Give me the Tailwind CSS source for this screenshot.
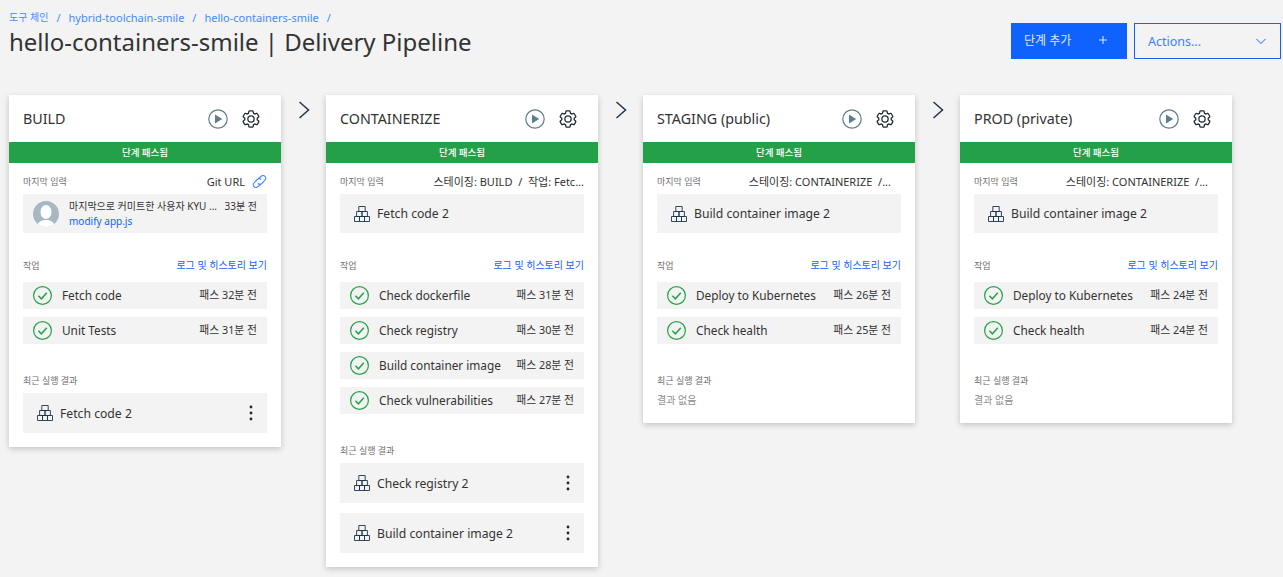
<!DOCTYPE html>
<html lang="ko">
<head>
  <meta charset="UTF-8">
  <title>hello-containers-smile | Delivery Pipeline</title>
  <script src="https://cdn.jsdelivr.net/npm/@tailwindcss/browser@4"></script>
</head>
<body class="bg-[#f3f3f3] h-[577px] overflow-hidden text-[#333] font-['Noto_Sans','Noto_Sans_CJK_KR',sans-serif]">

  <!-- Page header -->
  <header class="flex justify-between h-[95px] pl-[9px] pr-[2px]">
    <div>
      <nav class="flex gap-[8px] pt-[10px] h-[29px] text-[11px] leading-[15px] text-[#4589ff]">
        <a class="text-[10px]">도구 체인</a><span>/</span><a>hybrid-toolchain-smile</a><span>/</span><a>hello-containers-smile</a><span>/</span>
      </nav>
      <h1 class="text-[24px] leading-[26px] text-[#333]">hello-containers-smile | Delivery Pipeline</h1>
    </div>
    <div class="flex gap-[7px] pt-[23px] h-[59px] box-content">
      <button class="flex justify-between items-center w-[116px] h-[36px] pl-[13px] pr-[20px] bg-[#0f62fe] text-[#dfe8ff] text-[12px]">
        <span>단계 추가</span>
        <svg class="-mt-[2px]" width="8" height="8" viewBox="0 0 8 8" stroke="#dfe8ff"><path d="M4 0v8M0 4h8"/></svg>
      </button>
      <button class="flex justify-between items-center w-[147px] h-[36px] pl-[13px] pr-[14px] border border-[#0f62fe] text-[#3d7eff] text-[12.5px]">
        <span class="mt-[2px]">Actions...</span>
        <svg width="10" height="7" viewBox="0 0 10 7" fill="none" stroke="#0f62fe"><path d="M.5 1l4.5 4.5L9.500 1"/></svg>
      </button>
    </div>
  </header>

  <main id="stages" class="flex items-start pl-[9px]"></main>

  <script>
    const gear = `<svg width="20" height="20" viewBox="0 0 32 32" fill="#1f2a30"><path d="M27,16.76c0-.25,0-.5,0-.76s0-.51,0-.77l1.92-1.68A2,2,0,0,0,29.3,11L26.94,7a2,2,0,0,0-1.73-1,2,2,0,0,0-.64.1l-2.43.82a11.35,11.35,0,0,0-1.31-.75l-.51-2.52a2,2,0,0,0-2-1.61H13.64a2,2,0,0,0-2,1.61l-.51,2.52a11.48,11.48,0,0,0-1.32.75L7.43,6.06A2,2,0,0,0,6.79,6,2,2,0,0,0,5.06,7L2.7,11a2,2,0,0,0,.41,2.51L5,15.24c0,.25,0,.5,0,.76s0,.51,0,.77L3.11,18.45A2,2,0,0,0,2.7,21L5.06,25a2,2,0,0,0,1.73,1,2,2,0,0,0,.64-.1l2.43-.82a11.35,11.35,0,0,0,1.31.75l.51,2.52a2,2,0,0,0,2,1.61h4.72a2,2,0,0,0,2-1.61l.51-2.52a11.48,11.48,0,0,0,1.32-.75l2.42.82a2,2,0,0,0,.64.1,2,2,0,0,0,1.73-1L29.3,21a2,2,0,0,0-.41-2.51ZM25.21,24l-3.43-1.16a8.86,8.86,0,0,1-2.71,1.57L18.36,28H13.64l-.71-3.55a9.36,9.36,0,0,1-2.7-1.57L6.79,24,4.43,20l2.72-2.4a8.9,8.9,0,0,1,0-3.13L4.43,12,6.79,8l3.43,1.16a8.86,8.86,0,0,1,2.71-1.57L13.64,4h4.72l.71,3.55a9.36,9.36,0,0,1,2.7,1.57L25.21,8,27.57,12l-2.72,2.4a8.9,8.9,0,0,1,0,3.13L27.57,20Z"/><path d="M16,22a6,6,0,1,1,6-6A5.94,5.94,0,0,1,16,22Zm0-10a3.91,3.91,0,0,0-4,4,3.91,3.91,0,0,0,4,4,3.91,3.91,0,0,0,4-4A3.91,3.91,0,0,0,16,12Z"/></svg>`;
    const play = `<svg width="20" height="20" viewBox="0 0 20 20"><circle cx="10" cy="10" r="9.2" fill="none" stroke="#5f7d8a" stroke-width="1.2"/><path d="M7 5.600v8.800l7.200-4.400z" fill="#5f7d8a"/></svg>`;
    const blocks = `<svg class="shrink-0" width="16" height="16" viewBox="0 0 16 16" fill="none" stroke="#1d3649" stroke-width=".9"><path d="M4.800.5h6.400v5H4.800zM2.600 5.500h5.400v5H2.600zM8 5.500h5.400v5H8zM.5 10.500h5V15.500h-5zM5.500 10.500h5V15.500h-5zM10.500 10.500h5V15.500h-5z"/></svg>`;
    const check = `<svg class="shrink-0" width="19" height="19" viewBox="0 0 19 19" fill="none" stroke="#24a148" stroke-width="1.2"><circle cx="9.500" cy="9.500" r="8.900"/><path d="M5.400 9.800l3 3 5.400-6" stroke-width="1.500"/></svg>`;
    const kebab = `<svg width="4" height="16" viewBox="0 0 4 16" fill="#1f2a30"><circle cx="2" cy="2" r="1.400"/><circle cx="2" cy="8" r="1.400"/><circle cx="2" cy="14" r="1.400"/></svg>`;
    const link = `<svg width="15" height="13" viewBox="0 0 15 13" fill="none" stroke="#4589ff" stroke-width="1.100"><path d="M6.500 3.500l2.700-2.200c1.100-.9 2.800-.8 3.800.1 1.100 1 1.100 2.700 0 3.700L9.800 8.500c-1.200 1-2.900.9-3.900-.2"/><path d="M8.500 9.500l-2.700 2.200c-1.100.9-2.800.8-3.800-.1-1.100-1-1.100-2.700 0-3.700l3.200-3.400c1.200-1 2.900-.9 3.900.2"/></svg>`;
    const chevron = `<svg width="12" height="18" viewBox="0 0 12 18" fill="none" stroke="#1d3649" stroke-width="1.500"><path d="M1.500 1l9 8-9 8"/></svg>`;
    const avatar = `<svg class="shrink-0" width="26" height="26" viewBox="0 0 26 26"><defs><clipPath id="av"><circle cx="13" cy="13" r="13"/></clipPath></defs><g clip-path="url(#av)"><rect width="26" height="26" fill="#a8b8c0"/><ellipse cx="13" cy="11" rx="5.500" ry="7" fill="#fff"/><path d="M3 27c1-6 6-8 10-8s9 2 10 8z" fill="#fff"/></g></svg>`;

    const stages = [
      { name: 'BUILD', inputLabel: 'Git URL', labelPad: '', commit: true,
        jobs: [['Fetch code', '패스 32분 전'], ['Unit Tests', '패스 31분 전']],
        recent: ['Fetch code 2'] },
      { name: 'CONTAINERIZE', inputLabel: '스테이징: BUILD &nbsp;/&nbsp; 작업: Fetc...', labelPad: '', input: 'Fetch code 2',
        jobs: [['Check dockerfile', '패스 31분 전'], ['Check registry', '패스 30분 전'], ['Build container image', '패스 28분 전'], ['Check vulnerabilities', '패스 27분 전']],
        recent: ['Check registry 2', 'Build container image 2'] },
      { name: 'STAGING (public)', inputLabel: '스테이징: CONTAINERIZE &nbsp;/...', labelPad: 'pr-[10px]', input: 'Build container image 2',
        jobs: [['Deploy to Kubernetes', '패스 26분 전'], ['Check health', '패스 25분 전']],
        recent: [] },
      { name: 'PROD (private)', inputLabel: '스테이징: CONTAINERIZE &nbsp;/...', labelPad: 'pr-[10px]', input: 'Build container image 2',
        jobs: [['Deploy to Kubernetes', '패스 24분 전'], ['Check health', '패스 24분 전']],
        recent: [] },
    ];

    function inputBox(s) {
      if (s.commit) {
        return `<div class="flex items-center gap-[10px] h-[39px] mt-[5px] pl-[10px] bg-[#f3f3f3]">
          ${avatar}
          <div class="flex-1 pr-[10px]">
            <div class="flex justify-between text-[10px] leading-[15px] text-[#333] whitespace-nowrap"><span>마지막으로 커미트한 사용자 KYU ...</span><span>33분 전</span></div>
            <a class="block text-[10px] leading-[15px] text-[#0f62fe]">modify app.js</a>
          </div>
        </div>`;
      }
      return `<div class="flex items-center gap-[7px] h-[39px] mt-[5px] pl-[14px] bg-[#f3f3f3] text-[12.200px] text-[#333]">${blocks}<span class="mt-[2px]">${s.input}</span></div>`;
    }

    function renderStage(s, i) {
      const jobs = s.jobs.map(j => `<div class="flex items-center justify-between h-[27px] pl-[10px] pr-[10px] bg-[#f3f3f3]">
          <div class="flex items-center gap-[10px] text-[11.800px] text-[#333]">${check}<span>${j[0]}</span></div>
          <span class="text-[10.800px] text-[#333]">${j[1]}</span>
        </div>`).join('');
      const recent = s.recent.length
        ? s.recent.map(r => `<div class="flex items-center justify-between h-[40px] pl-[14px] pr-[14px] bg-[#f3f3f3]">
            <div class="flex items-center gap-[7px] text-[12.200px] text-[#333]">${blocks}<span class="mt-[2px]">${r}</span></div>${kebab}
          </div>`).join('')
        : `<div class="text-[10px] leading-[15px] text-[#8d8d8d]">결과 없음</div>`;

      return `<section class="w-[272px] shrink-0 bg-white shadow-[0_2px_6px_rgba(0,0,0,0.2)] ${s.recent.length ? 'pb-[14px]' : 'pb-[15px]'}">
        <div class="flex items-center justify-between h-[47px] pl-[14px] pr-[20px]">
          <h2 class="text-[14.300px] mt-[1px] text-[#333]">${s.name}</h2>
          <div class="flex items-center gap-[13px]">${play}${gear}</div>
        </div>
        <div class="h-[21px] bg-[#24a148] text-white text-[9.500px] font-medium leading-[21px] text-center">단계 패스됨</div>
        <div class="px-[14px]">
          <div class="flex justify-between items-end h-[26px] text-[9px] leading-[15px]">
            <span class="text-[#6f6f6f]">마지막 입력</span>
            <span class="flex items-center gap-[7px] text-[11px] text-[#333] whitespace-nowrap ${s.labelPad}">${s.inputLabel}${s.commit ? link : ''}</span>
          </div>
          ${inputBox(s)}
          <div class="flex justify-between items-end h-[40px] mb-[9px] text-[10px] leading-[15px]">
            <span class="text-[9px] text-[#6f6f6f]">작업</span><a class="text-[#0f62fe]">로그 및 히스토리 보기</a>
          </div>
          <div class="flex flex-col gap-[8px]">${jobs}</div>
          <div class="mt-[29px] mb-[5px] text-[9px] leading-[15px] text-[#6f6f6f]">최근 실행 결과</div>
          <div class="flex flex-col gap-[10px]">${recent}</div>
        </div>
      </section>`;
    }

    document.getElementById('stages').innerHTML = stages.map((s, i) => renderStage(s, i) +
      (i < stages.length - 1 ? `<div class="flex justify-center w-[45px] pt-[6px]">${chevron}</div>` : '')).join('');
  </script>
</body>
</html>
